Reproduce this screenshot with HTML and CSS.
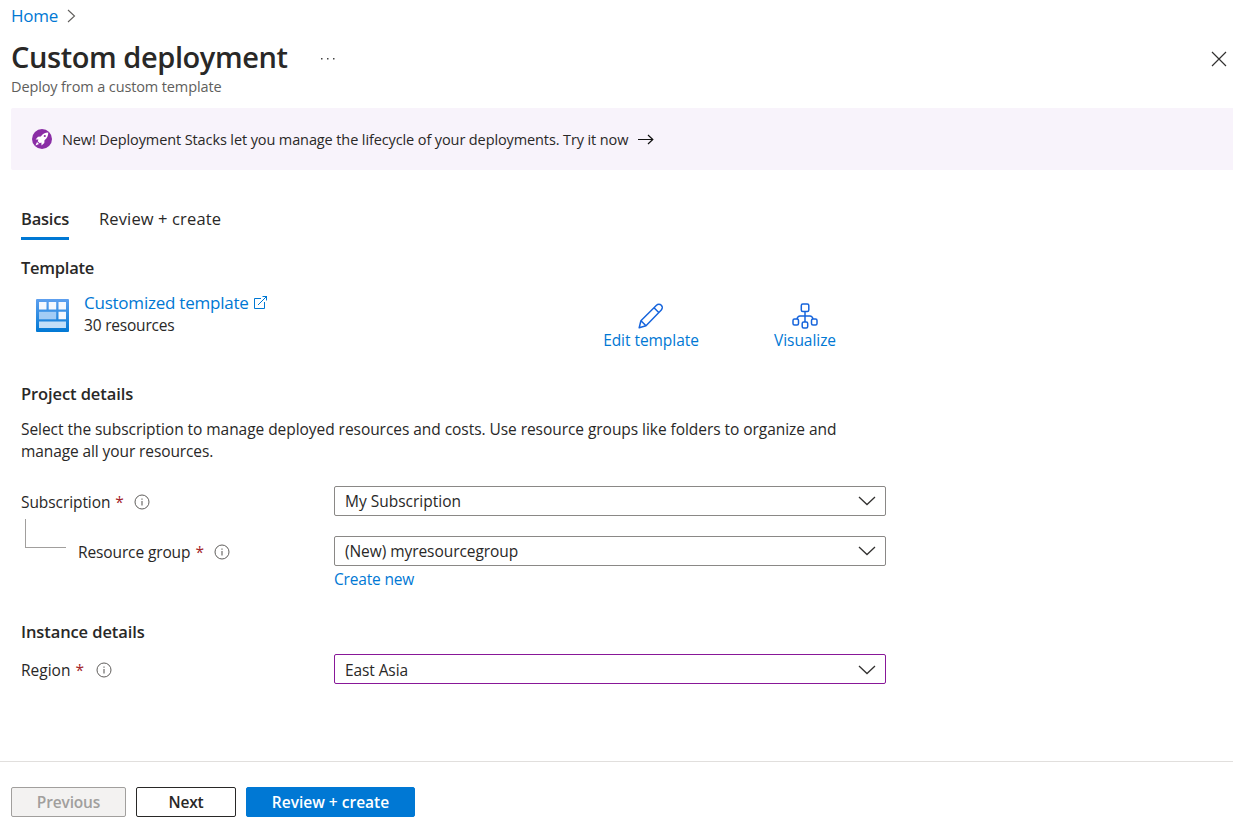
FILE: index.html
```
<!DOCTYPE html>
<html lang="en">
<head>
<meta charset="utf-8">
<title>Custom deployment</title>
<link rel="stylesheet" href="styles.css">
</head>
<body>
<div class="page">
  <nav class="breadcrumb"><a class="t-home">Home</a><svg width="9" height="14" viewBox="0 0 9 14"><path d="M1 1l6.500 6L1 13" fill="none" stroke="#605e5c" stroke-width="1.100"/></svg></nav>
  <header class="header">
    <h1 class="t-title">Custom deployment</h1>
    <svg class="more" width="16" height="4" viewBox="0 0 16 4"><path d="M1 1h1.500v1.500H1zM7 1h1.500v1.500H7zM13 1h1.500v1.500H13z" fill="#444"/></svg>
    <svg class="close" width="16" height="16" viewBox="0 0 16 16"><path d="M1 1l14 14M15 1L1 15" stroke="#323130" stroke-width="1.200"/></svg>
  </header>
  <div class="subtitle"><span class="t-sub">Deploy from a custom template</span></div>
  <div class="banner">
    <svg width="20" height="20" viewBox="0 0 20 20"><circle cx="10" cy="10" r="10" fill="#8a2da5"/><path d="M16.300 3.500C13 3.600 10.600 5 8.800 7.500L6 7.700 3.600 10.500l2.800.1-.7 1.700 2 2 1.700-.7.1 2.800 2.800-2.400.2-2.800c2.500-1.900 3.800-4.300 3.800-7.700z" fill="#fff"/><circle cx="12.800" cy="7" r="1.100" fill="#8a2da5"/><path d="M5 13l-1.500 3.500L7 15" fill="#fff"/></svg>
    <span class="t-banner">New! Deployment Stacks let you manage the lifecycle of your deployments. Try it now</span>
    <svg class="arrow" width="16" height="12" viewBox="0 0 16 12"><path d="M0 5.500h15M10 1l4.800 4.500L10 10" fill="none" stroke="#111" stroke-width="1.200"/></svg>
  </div>
  <main class="content">
    <div class="tabs"><a class="tab active">Basics</a><a class="tab t-review">Review + create</a></div>
    <h2 class="h-template">Template</h2>
    <section class="template">
      <svg class="tpl" width="33" height="33" viewBox="0 0 33 33"><defs><linearGradient id="g" x1="0" y1="0" x2="0" y2="1"><stop offset="0" stop-color="#5ea0ef"/><stop offset="1" stop-color="#0078d4"/></linearGradient></defs><rect width="33" height="33" rx="1" fill="url(#g)"/><path d="M3 3h7.500v7.500H3zM12.700 3h7.500v7.500h-7.500zM22.500 3H30v7.500h-7.500zM22.500 12.800H30v7.500h-7.500z" fill="#f4f8fe"/><path d="M3 12.800h17.200v7.500H3z" fill="#a3ccf5"/><path d="M3 22.500h27V29H3z" fill="#c3dff8"/></svg>
      <div class="info">
        <div class="name"><a class="t-custom">Customized template</a><svg width="15" height="15" viewBox="0 0 15 15"><path d="M8 3.500H1.500v10H11.500V7M5 10l9-9M9.500 1.500H13.500v4" fill="none" stroke="#0078d4" stroke-width="1"/></svg></div>
        <div class="t-count">30 resources</div>
      </div>
      <a class="action edit"><svg width="26" height="26" viewBox="0 0 26 26"><path d="M1.200 24.800l1.700-7L18.500 2.200a3.300 3.300 0 0 1 4.800 4.800L8 22.800zM16 4.800l5 5M3 17.800l5 5" fill="none" stroke="#1664dc" stroke-width="1.500" stroke-linejoin="round"/></svg><span class="t-edit">Edit template</span></a>
      <a class="action vis"><svg width="26" height="26" viewBox="0 0 26 26"><g fill="none" stroke="#1664dc" stroke-width="1.500"><rect x="9.300" y="1" width="7.500" height="7.500" rx="1.500"/><rect x="1" y="16" width="5.500" height="6" rx="1.500"/><rect x="10.200" y="19" width="5.500" height="6" rx="1.500"/><rect x="19.500" y="16" width="5.500" height="6" rx="1.500"/><path d="M13 8.500V19M5 16c.5-2 1.500-3 3-3h10c1.500 0 2.500 1 3 3"/></g></svg><span class="t-vis">Visualize</span></a>
    </section>
    <h2 class="h-project">Project details</h2>
    <p class="desc"><span class="t-d1">Select the subscription to manage deployed resources and costs. Use resource groups like folders to organize and</span><br><span class="t-d2">manage all your resources.</span></p>
    <div class="row"><label class="label"><span class="t-subs">Subscription</span><span class="req">*</span><svg class="i" width="16" height="16" viewBox="0 0 16 16"><circle cx="8" cy="8" r="7" fill="none" stroke="#605e5c"/><path d="M8 7v4.500M8 4.500v1.200" stroke="#605e5c" stroke-width="1.100"/></svg></label>
      <div class="select"><span>My Subscription</span><svg width="18" height="10" viewBox="0 0 18 10"><path d="M1 1l8 7.500L17 1" fill="none" stroke="#323130" stroke-width="1.300"/></svg></div></div>
    <div class="row second"><label class="label"><span class="branch"></span><span class="t-rg">Resource group</span><span class="req">*</span><svg class="i" width="16" height="16" viewBox="0 0 16 16"><circle cx="8" cy="8" r="7" fill="none" stroke="#605e5c"/><path d="M8 7v4.500M8 4.500v1.200" stroke="#605e5c" stroke-width="1.100"/></svg></label>
      <div class="select"><span class="t-new">(New) myresourcegroup</span><svg width="18" height="10" viewBox="0 0 18 10"><path d="M1 1l8 7.500L17 1" fill="none" stroke="#323130" stroke-width="1.300"/></svg></div></div>
    <div class="create"><a class="t-create">Create new</a></div>
    <h2 class="h-instance">Instance details</h2>
    <div class="row region"><label class="label"><span>Region</span><span class="req">*</span><svg class="i" width="16" height="16" viewBox="0 0 16 16"><circle cx="8" cy="8" r="7" fill="none" stroke="#605e5c"/><path d="M8 7v4.500M8 4.500v1.200" stroke="#605e5c" stroke-width="1.100"/></svg></label>
      <div class="select focus"><span class="t-east">East Asia</span><svg width="18" height="10" viewBox="0 0 18 10"><path d="M1 1l8 7.500L17 1" fill="none" stroke="#323130" stroke-width="1.300"/></svg></div></div>
  </main>
  <footer class="footer"><button class="btn disabled">Previous</button><button class="btn next">Next</button><button class="btn primary">Review + create</button></footer>
</div>
</body>
</html>
```
FILE: styles.css
```
* { box-sizing: border-box; }
body { margin: 0; background: #fff; color: #292827; font: 15.5px/22px "Open Sans", "Noto Sans", sans-serif; overflow: hidden; }
svg { display: block; flex: none; }
h1, h2, p { margin: 0; }
a { color: #0078d4; }
span, a { white-space: nowrap; }
.page { width: 1233px; height: 832px; display: flex; flex-direction: column; }
.breadcrumb { display: flex; align-items: center; height: 32px; padding-left: 11px; gap: 9px; font-size: 17px; }
.t-home { letter-spacing: -0.25px; }
.header { display: flex; align-items: center; height: 44px; padding: 6px 6px 0 11px; }
.header h1 { font-size: 29px; line-height: 38px; font-weight: 600; letter-spacing: -0.42px; }
.more { margin: 3px 0 0 32px; }
.close { margin: 3px 0 0 auto; }
.subtitle { padding-left: 11px; height: 32px; font-size: 14.5px; color: #605e5c; }
.t-sub { letter-spacing: -0.12px; }
.banner { margin-left: 11px; height: 62px; background: #f8f3fb; border-radius: 2px 0 0 2px; display: flex; align-items: center; padding-left: 21px; gap: 10px; font-size: 14.5px; }
.t-banner { letter-spacing: -0.11px; margin-top: 2px; }
.arrow { margin-top: 2px; }
.content { padding-left: 21px; flex: 1; }
.tabs { display: flex; gap: 30px; margin-top: 36px; height: 34px; font-size: 16.5px; }
.tab { color: #292827; line-height: 26px; border-bottom: 3px solid transparent; }
.active { font-weight: 600; border-bottom-color: #0078d4; letter-spacing: -0.22px; }
.t-review { letter-spacing: 0.13px; }
h2 { font-size: 16.5px; line-height: 24px; font-weight: 600; letter-spacing: -0.1px; }
.h-template { margin-top: 16px; letter-spacing: -0.25px; }
.template { display: flex; height: 66px; margin-top: 10px; padding-left: 15px; }
.tpl { margin-top: 9px; }
.info { margin-left: 15px; width: 519px; }
.name { display: flex; align-items: center; gap: 4px; font-size: 17px; line-height: 25px; height: 24px; }
.t-custom { letter-spacing: -0.23px; }
.t-count { letter-spacing: -0.2px; }
.action { display: flex; flex-direction: column; align-items: center; margin-top: 13px; width: 96px; }
.t-edit { letter-spacing: -0.05px; }
.vis { margin-left: 75px; width: 62px; }
.t-vis { letter-spacing: -0.05px; }
.h-project { margin-top: 26px; }
.desc { margin-top: 12px; height: 68px; }
.t-d1 { letter-spacing: -0.05px; }
.t-d2 { letter-spacing: -0.1px; }
.row { display: flex; height: 30px; }
.second { margin-top: 20px; }
.label { width: 313px; display: flex; align-items: center; padding-top: 2px; }
.t-subs { letter-spacing: -0.08px; }
.req { color: #a4262c; margin-left: 5px; }
.i { margin-left: 10px; }
.region .i { margin-left: 12px; }
.branch { width: 41px; height: 29px; border: solid #a19f9d; border-width: 0 0 1px 1px; margin: -37px 12px 0 4px; }
.t-rg { letter-spacing: -0.12px; }
.select { width: 552px; border: 1px solid #8a8886; border-radius: 2px; display: flex; align-items: center; justify-content: space-between; padding: 0 9px 0 10px; }
.t-new { letter-spacing: -0.06px; }
.region .select { padding-top: 2px; }
.t-east { letter-spacing: -0.1px; }
.focus { border-color: #881798; }
.create { margin: 2px 0 0 313px; }
.t-create { letter-spacing: -0.18px; }
.h-instance { margin: 30px 0 10px; }
.footer { border-top: 1px solid #e1dfdd; height: 71px; padding: 25px 0 0 11px; display: flex; gap: 10px; }
.btn { height: 30px; font: 600 15.5px/22px "Open Sans", sans-serif; border-radius: 2px; border: 1px solid #292827; background: #fff; width: 100px; padding: 0 0 1px; color: #292827; }
.disabled { width: 115px; background: #f3f2f1; border-color: #a19f9d; color: #a19f9d; letter-spacing: -0.15px; }
.next { letter-spacing: -0.15px; }
.primary { width: 169px; background: #0078d4; border-color: #0078d4; color: #fff; }
```
